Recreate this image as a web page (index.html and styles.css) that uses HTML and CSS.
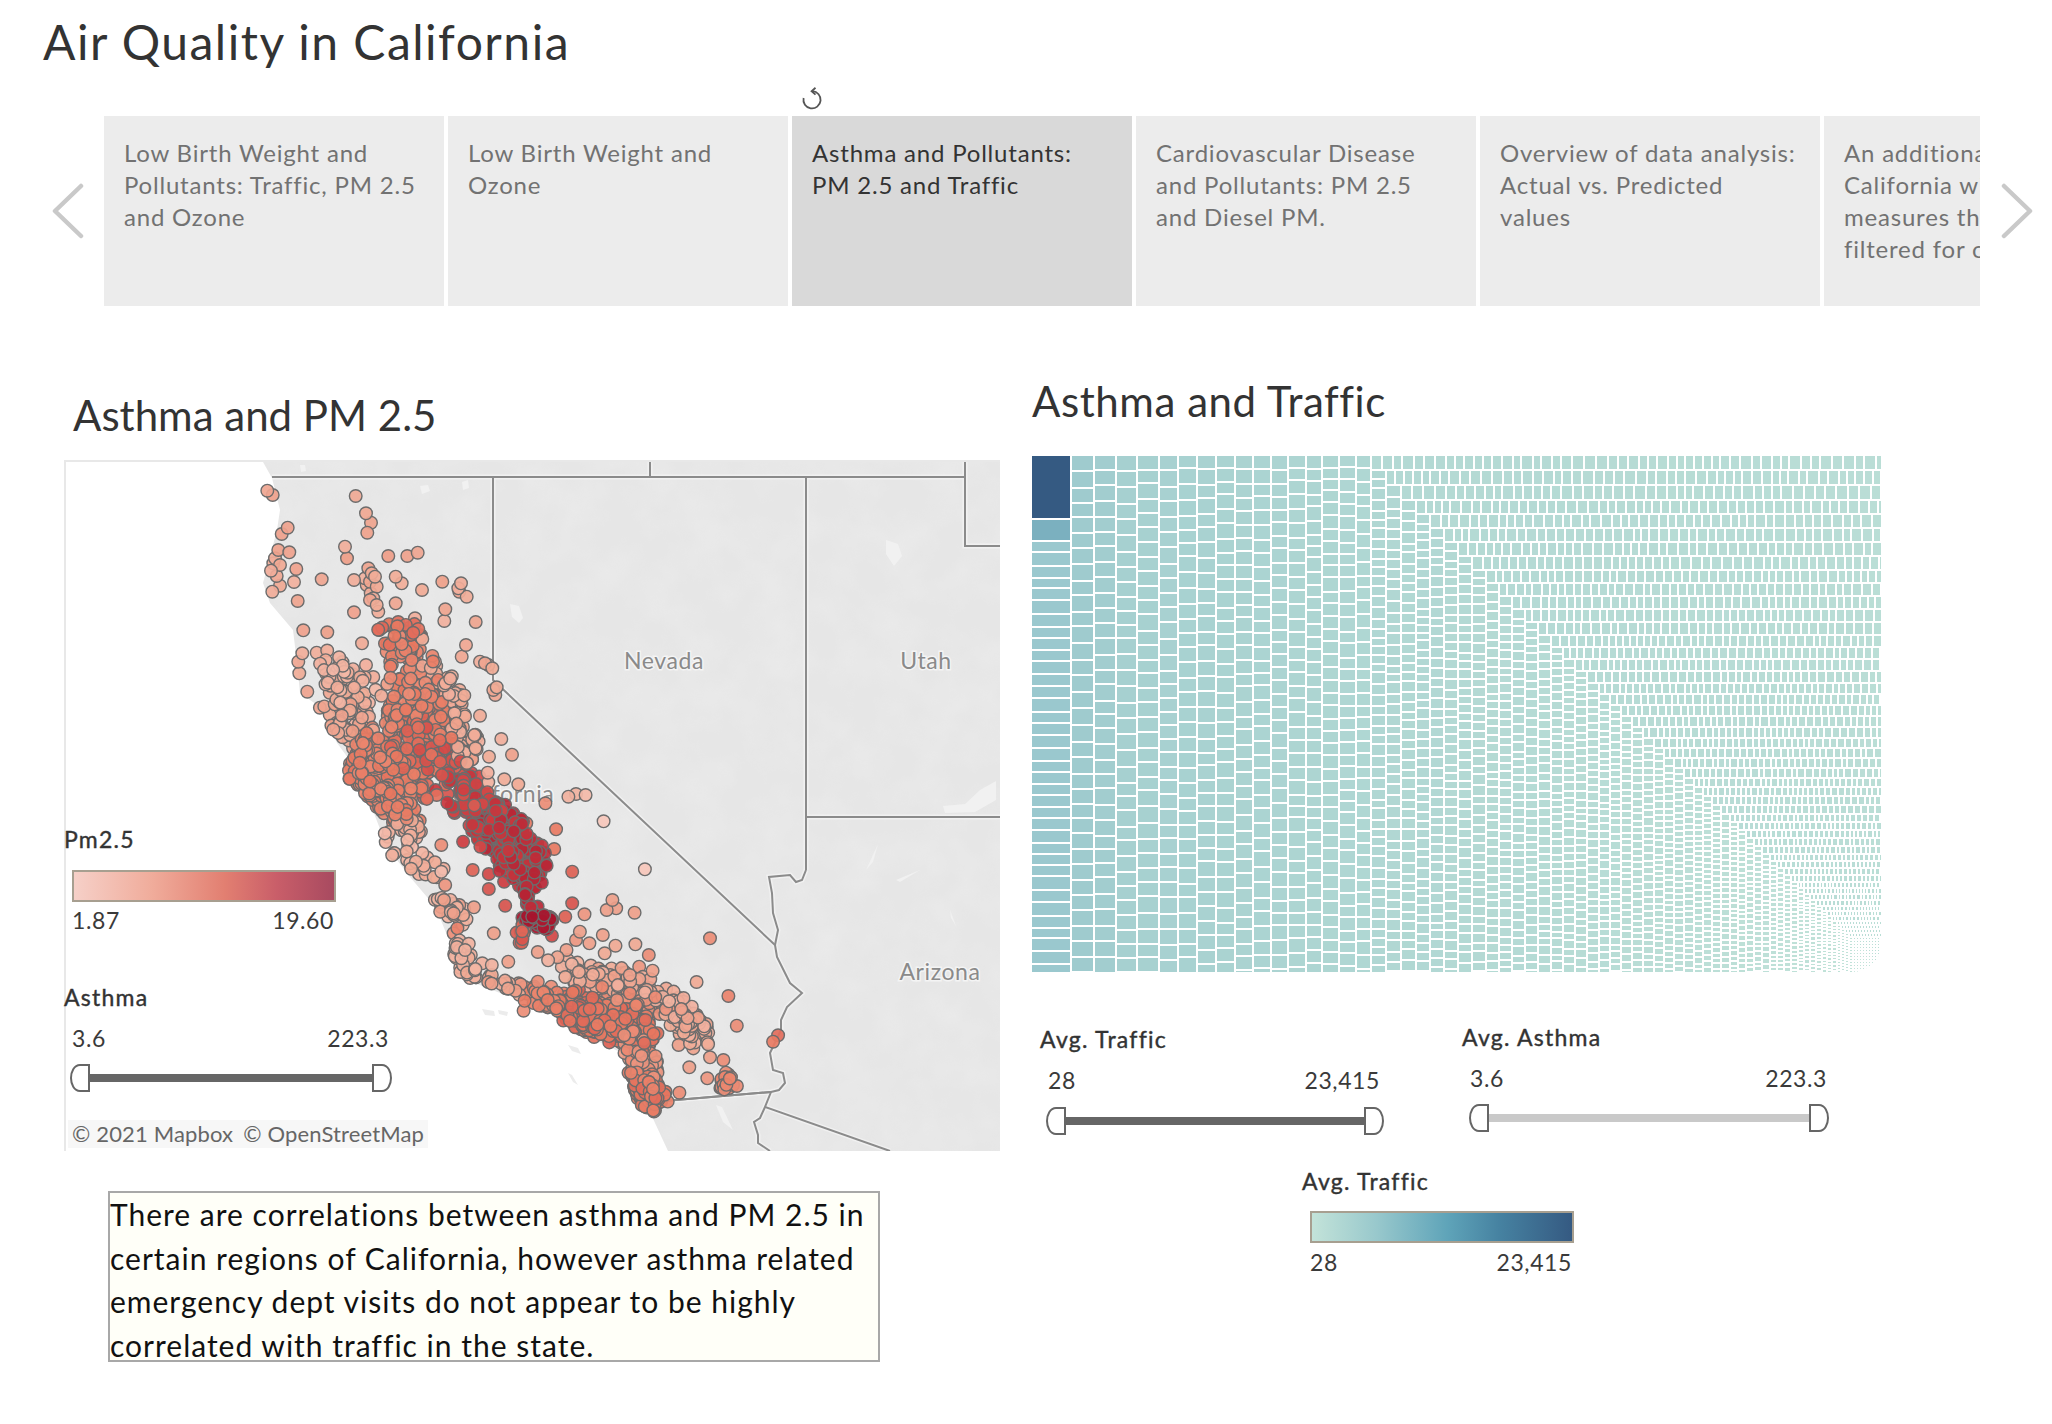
FILE: index.html
```html
<!DOCTYPE html>
<html lang="en">
<head>
<meta charset="utf-8">
<title>Air Quality in California</title>
<link rel="stylesheet" href="styles.css">
</head>
<body>
<div class="page">
  <h1 class="title">Air Quality in California</h1>
  <div class="refresh-row">
    <svg class="refresh" viewBox="0 0 24 24" width="24" height="24"><path d="M12.5 4.2A8.6 8.6 0 1 1 3.6 11" /><path d="M15.5 .8 11.6 4.2l3.9 3.4" /></svg>
  </div>
  <div class="carousel">
    <svg class="chevron" viewBox="0 0 32 56" width="32" height="56"><path d="M29 3 3 28l26 25"/></svg>
    <div class="tabs">
      <div class="tab">Low Birth Weight and<br>Pollutants: Traffic, PM 2.5<br>and Ozone</div>
      <div class="tab">Low Birth Weight and<br>Ozone</div>
      <div class="tab tab-active">Asthma and Pollutants:<br>PM 2.5 and Traffic</div>
      <div class="tab">Cardiovascular Disease<br>and Pollutants: PM 2.5<br>and Diesel PM.</div>
      <div class="tab">Overview of data analysis:<br>Actual vs. Predicted<br>values</div>
      <div class="tab">An additional look at<br>California with other<br>measures that were<br>filtered for counties</div>
    </div>
    <svg class="chevron chevron-next" viewBox="0 0 32 56" width="32" height="56"><path d="M3 3l26 25L3 53"/></svg>
  </div>

  <main class="dash">
    <section class="left">
      <h2 class="sheet-title">Asthma and PM 2.5</h2>
      <div class="map">
        <svg class="map-svg" viewBox="66 462 934 689" width="934" height="689">
          <defs>
            <filter id="terrain" x="0" y="0" width="100%" height="100%">
              <feTurbulence type="fractalNoise" baseFrequency=".025" numOctaves="3" seed="7"/>
              <feColorMatrix type="matrix" values="0 0 0 0 1  0 0 0 0 1  0 0 0 0 1  1.6 0 0 0 -.55"/>
            </filter>
            <g id="borders">
              <path d="M272 477H965M650 462V477M965 462V546H1000M806 477V870M806 817H1000"/>
              <path d="M493 477V680L775 945"/>
              <path d="M806 870 802 880 796 882 790 875 769 877 772 893 773 913 778 930 775 945 777 957 787 977 790 983 802 993 787 1007 781 1020 781 1030 770 1053 773 1070 783 1073 785 1083 779 1090 771 1092 664 1101"/>
              <path d="M771 1092 765 1107 890 1151M765 1107 760 1118 754 1122 758 1135 758 1143 770 1151"/>
            </g>
          </defs>
          <rect x="66" y="462" width="934" height="689" fill="#e6e6e6"/>
          <rect class="terrain" x="66" y="462" width="934" height="689" filter="url(#terrain)"/>
          <g class="water">
            <path d="M943 806l22-2 15-14 16-9v19l-21 12-30 1z"/>
            <path d="M510 604l9 2 4 12-4 5-7-6z"/>
            <path d="M886 540l12 4 4 12-8 10-8-12z"/>
            <path d="M716 1105l6 2 11 23-10-8z"/>
            <path d="M420 486l8-1 2 6-8 3zM462 482l6-2 1 8-6 2zM300 465l5 0 1 6-5 1z"/>
            <path d="M866 870l12-26-5 18zM896 880l24-10-20 12zM950 910l6 16-5-8z"/>
          </g>
          <use href="#borders" class="border-halo"/>
          <use href="#borders" class="border-line"/>
          <path class="ocean" d="M66 462H263L272 478 280 510 277 530 263 583 270 603 293 630 297 663 300 693 320 707 337 743 357 770 370 803 387 847 410 877 427 897 438 913 457 960 467 980 500 993 522 993 568 1027 622 1053 630 1090 649 1110 668 1151H66Z"/>
          <g class="islands">
            <path d="M482 1009l12 2 1 5-10-1zM498 1010l10 2-1 4-8-2zM568 1045l10 3 3 6-9-3zM568 1073l4 2 6 10-5-3z"/>
          </g>
          <path class="border-line" d="M664 1101 771 1092"/>
          <g class="map-labels">
            <text x="664" y="669">Nevada</text>
            <text x="926" y="669">Utah</text>
            <text x="940" y="980">Arizona</text>
            <text x="503" y="802">California</text>
          </g>
          <g id="dots"></g>
        </svg>
        <div class="map-legends">
          <div class="field-label">Pm2.5</div>
          <div class="ramp ramp-red"></div>
          <div class="range range-red"><span>1.87</span><span>19.60</span></div>
          <div class="field-label label-asthma">Asthma</div>
          <div class="range range-asthma"><span>3.6</span><span>223.3</span></div>
          <div class="slider slider-asthma">
            <svg class="handle" viewBox="0 0 20 28" width="20" height="28"><path d="M19 1H10C4 1 1 8 1 14s3 13 9 13h9z"/></svg>
            <span class="track"></span>
            <svg class="handle handle-end" viewBox="0 0 20 28" width="20" height="28"><path d="M19 1H10C4 1 1 8 1 14s3 13 9 13h9z"/></svg>
          </div>
        </div>
        <div class="attribution"><span>© 2021 Mapbox</span><span>© OpenStreetMap</span></div>
      </div>
      <p class="note">There are correlations between asthma and PM 2.5 in certain regions of California, however asthma related emergency dept visits do not appear to be highly correlated with traffic in the state.</p>
    </section>

    <section class="right">
      <h2 class="sheet-title sheet-title-right">Asthma and Traffic</h2>
      <div class="treemap">
        <svg id="treemap" viewBox="1032 456 850 516" width="850" height="516" shape-rendering="crispEdges"></svg>
      </div>
      <div class="filters">
        <div class="filter filter-traffic">
          <div class="field-label">Avg. Traffic</div>
          <div class="range range-traffic"><span>28</span><span>23,415</span></div>
          <div class="slider slider-traffic">
            <svg class="handle" viewBox="0 0 20 28" width="20" height="28"><path d="M19 1H10C4 1 1 8 1 14s3 13 9 13h9z"/></svg>
            <span class="track"></span>
            <svg class="handle handle-end" viewBox="0 0 20 28" width="20" height="28"><path d="M19 1H10C4 1 1 8 1 14s3 13 9 13h9z"/></svg>
          </div>
        </div>
        <div class="filter filter-asthma">
          <div class="field-label">Avg. Asthma</div>
          <div class="range range-avg-asthma"><span>3.6</span><span>223.3</span></div>
          <div class="slider slider-avg-asthma">
            <svg class="handle" viewBox="0 0 20 28" width="20" height="28"><path d="M19 1H10C4 1 1 8 1 14s3 13 9 13h9z"/></svg>
            <span class="track track-light"></span>
            <svg class="handle handle-end" viewBox="0 0 20 28" width="20" height="28"><path d="M19 1H10C4 1 1 8 1 14s3 13 9 13h9z"/></svg>
          </div>
        </div>
      </div>
      <div class="traffic-legend">
        <div class="field-label">Avg. Traffic</div>
        <div class="ramp ramp-blue"></div>
        <div class="range range-blue"><span>28</span><span>23,415</span></div>
      </div>
    </section>
  </main>
</div>
<script src="app.js"></script>
</body>
</html>
```

FILE: styles.css
```css
* { box-sizing: border-box; }
html, body { margin: 0; padding: 0; background: #fff; }
body { font-family: "Lato", "Liberation Sans", sans-serif; color: #333; overflow: hidden; font-variant-ligatures: none; }
.page { width: 2052px; height: 1424px; }

.title { margin: 0; height: 80px; padding: 13px 0 0 43px; font-size: 48px; line-height: 58px; font-weight: 400; color: #333; letter-spacing: 1.5px; }

.refresh-row { height: 36px; padding: 7px 0 0 800px; }
.refresh { display: block; fill: none; stroke: #555; stroke-width: 1.8; }

.carousel { display: flex; align-items: center; height: 190px; padding-left: 52px; }
.chevron { flex: none; fill: none; stroke: #c9c9c9; stroke-width: 4.5; stroke-linecap: round; stroke-linejoin: round; }
.tabs { display: flex; gap: 4px; width: 1876px; height: 190px; margin-left: 20px; overflow: hidden; flex: none; }
.tab { flex: none; width: 340px; padding: 21px 0 0 20px; background: #ececec; color: #727272; font-size: 24px; line-height: 32px; letter-spacing: .8px; white-space: nowrap; }
.tab:last-child { width: 156px; overflow: hidden; }
.tab-active { background: #d9d9d9; color: #333; }
.chevron-next { margin-left: 21px; }

.dash { display: grid; grid-template-columns: 1032px 1fr; }
.sheet-title { margin: 0; padding: 84px 0 0 9px; height: 154px; font-size: 42px; line-height: 50px; font-weight: 400; color: #333; }
.left { padding-left: 64px; }
.sheet-title-right { padding: 70px 0 0 0; height: 150px; letter-spacing: .55px; }

.map { position: relative; width: 936px; height: 691px; border: 2px solid #e8e8e8; border-right: 0; }
.map-svg { display: block; }
.terrain { opacity: .18; }
.ocean { fill: #fff; }
.water path { fill: #f1f1f1; }
.islands path { fill: #ececec; }
.border-halo { fill: none; stroke: #f1f1f1; stroke-width: 5; }
.border-line { fill: none; stroke: #8b8b8b; stroke-width: 2; }
.map-labels text { font-size: 23px; fill: #8a8a8a; text-anchor: middle; stroke: #f4f4f4; stroke-width: 3px; paint-order: stroke; letter-spacing: .6px; }
#dots circle { stroke: #6c6c6c; stroke-width: 1.4; fill-opacity: .92; }

.map-legends { position: absolute; left: -1px; top: 363px; width: 340px; }
.field-label { height: 28px; margin-left: -1px; font-size: 23px; line-height: 28px; font-weight: 400; color: #333; letter-spacing: 1.25px; -webkit-text-stroke: .4px #333; }
.ramp { width: 264px; height: 32px; border: 2px solid #a79f90; }
.ramp-red { margin: 17px 0 0 7px; background: linear-gradient(90deg, #f6d0c8, #f0ac9b 30%, #e27f71 58%, #c95e69 78%, #a84a60); }
.ramp-blue { margin: 16px 0 0 7px; background: linear-gradient(90deg, #c3e3d9, #98c8cc 25%, #5fa4b9 52%, #4682a1 72%, #355a82); }
.range { display: flex; justify-content: space-between; height: 28px; font-size: 23px; line-height: 28px; color: #3a3a3a; letter-spacing: .6px; }
.range-red { width: 262px; margin: 4px 0 0 7px; }
.label-asthma { margin-top: 49px; }
.range-asthma { width: 317px; margin: 13px 0 0 7px; }
.slider { display: flex; align-items: center; height: 28px; }
.slider-asthma { width: 322px; margin: 12px 0 0 5px; }
.handle { flex: none; fill: #fff; stroke: #666; stroke-width: 2; }
.handle-end { transform: scaleX(-1); }
.track { flex: 1; height: 8px; background: #666; }
.track-light { background: #c9c9c9; }

.attribution { position: absolute; left: 2px; top: 658px; display: flex; gap: 10px; padding: 0 4px; height: 28px; background: #f7f7f7; font-size: 22px; line-height: 28px; letter-spacing: .15px; color: #666; }

.note { width: 772px; height: 171px; margin: 40px 0 0 44px; padding: 0; border: 2px solid #a8a8a8; background: #fffff8; color: #111; font-size: 30px; line-height: 43.7px; letter-spacing: 1px; overflow: hidden; }

.treemap { width: 850px; height: 516px; overflow: hidden; border-bottom-right-radius: 30px; }
.treemap svg { display: block; }

.filters { display: flex; margin: 51px 0 0 9px; }
.filter-traffic { width: 422px; margin-top: 2px; }
.range-traffic { width: 332px; margin: 13px 0 0 7px; }
.slider-traffic { width: 338px; margin: 13px 0 0 5px; }
.range-avg-asthma { width: 357px; margin: 13px 0 0 7px; }
.slider-avg-asthma { width: 360px; margin: 12px 0 0 6px; }

.traffic-legend { margin: 32px 0 0 271px; }
.range-blue { width: 262px; margin: 5px 0 0 7px; }
```

FILE: app.js
```js
(function () {
  var seed = 20210;
  function rnd() {
    seed = (seed + 0x6D2B79F5) | 0;
    var t = Math.imul(seed ^ (seed >>> 15), 1 | seed);
    t = (t + Math.imul(t ^ (t >>> 7), 61 | t)) ^ t;
    return ((t ^ (t >>> 14)) >>> 0) / 4294967296;
  }
  var NS = 'http://www.w3.org/2000/svg';
  function hex(c) { return [parseInt(c.substr(1, 2), 16), parseInt(c.substr(3, 2), 16), parseInt(c.substr(5, 2), 16)]; }
  function ramp(stops, v) {
    v = Math.max(0, Math.min(1, v));
    for (var i = 1; i < stops.length; i++) {
      if (v <= stops[i][0]) {
        var a = stops[i - 1], b = stops[i], u = (v - a[0]) / (b[0] - a[0]);
        var ca = hex(a[1]), cb = hex(b[1]);
        return 'rgb(' + Math.round(ca[0] + (cb[0] - ca[0]) * u) + ',' + Math.round(ca[1] + (cb[1] - ca[1]) * u) + ',' + Math.round(ca[2] + (cb[2] - ca[2]) * u) + ')';
      }
    }
    return stops[stops.length - 1][1];
  }

  /* ---- map marks ---- */
  var red = [[0, '#f7cfc5'], [.25, '#f0a994'], [.5, '#e87a62'], [.75, '#cd3b3f'], [1, '#a5122c']];
  var dots = [];
  function add(x, y, v) { dots.push([x, y, v]); }

  var north = [[652,122],[668,135],[917,138],[948,190],[963,218],[952,248],[713,233],[695,252],[885,290],[891,325],[1015,318],[1072,318],[1103,308],[718,307],[685,300],[675,325],[670,340],[690,345],[663,362],[680,378],[739,357],[732,396],[690,407],[667,425],[815,388],[912,390],[743,453],[1037,380],[1055,400],[1116,420],[1177,395],[1233,400],[1225,415],[1228,425],[1250,440],[1037,460],[912,487],[1186,478],[1183,513],[1277,516],[760,541],[832,547],[936,580],[1248,585],[1235,620],[1117,567],[1095,505],[757,610],[800,608],[745,635],[748,670],[772,725],[948,645],[970,681],[1012,702],[994,737],[1290,797],[1354,867],[1386,914],[1317,920],[1313,968],[1315,997],[1363,988],[1405,1003],[1290,635],[1305,640],[1315,645],[1327,655],[1340,712],[1330,720],[1336,735],[955,355],[965,370],[975,380],[945,385],[960,395],[980,410],[950,405],[962,430],[970,445],[960,450],[980,465],[985,485]];
  north.forEach(function (p) { add(50 + p[0] / 3, 450 + p[1] / 3, .2 + rnd() * .12); });

  var south = [[532,124,.05],[640,268,.05],[408,148,.5],[403,207,.5],[450,275,.6],[330,130,.5],[165,185,.75],[210,200,.7],[108,195,.4],[118,315,.35],[190,270,.6],[232,282,.7],[272,305,.75],[232,327,.65],[275,377,.65],[450,370,.65],[432,410,.6],[482,403,.35],[555,360,.3],[540,390,.3],[565,385,.3],[613,398,.3],[810,475,.4],[193,382,.3],[245,460,.3],[283,545,.3],[360,516,.3],[387,541,.2],[858,648,.45],[880,737,.4],[775,606,.25],[323,692,.4],[988,766,.55],[975,785,.5],[730,938,.4],[803,895,.35],[756,862,.3],[810,832,.3],[845,840,.4],[803,787,.25],[728,795,.3],[615,493,.25],[563,497,.25],[535,520,.25],[435,510,.3],[437,548,.25],[470,455,.3],[460,480,.35],[495,490,.3],[530,465,.3],[318,488,.6],[315,455,.55],[397,467,.7],[650,525,.4],[625,560,.35],[660,572,.3],[440,50,.2],[460,42,.2],[485,45,.15],[380,70,.4],[115,360,.3],[105,395,.3],[140,400,.3],[165,405,.25],[155,375,.3],[150,445,.45],[140,460,.4],[170,510,.2],[185,525,.2],[165,555,.2],[195,590,.2],[240,555,.2],[240,585,.25],[215,550,.2],[265,612,.2],[285,610,.25],[310,610,.3],[360,605,.4],[395,620,.4]];
  south.forEach(function (p) { add(400 + p[0] / 2.613, 780 + p[1] / 3, p[2]); });

  /* capsule: x0,y0,x1,y1,radius,count,v0,v1 */
  var capsules = [
    [385,630,420,640,16,34,.5,.58],
    [405,645,420,700,24,70,.4,.52],
    [325,665,360,700,20,60,.15,.25],
    [335,705,365,740,20,55,.2,.32],
    [435,668,450,695,14,26,.18,.28],
    [425,700,435,725,16,60,.45,.55],
    [395,705,400,730,14,45,.42,.55],
    [455,700,470,760,16,55,.2,.3],
    [425,725,445,760,18,70,.5,.6],
    [400,735,430,790,20,60,.48,.6],
    [365,760,395,790,26,230,.42,.52],
    [385,795,410,820,15,80,.4,.52],
    [360,735,385,765,16,60,.42,.52],
    [395,815,420,835,9,22,.2,.3],
    [385,835,435,875,12,28,.12,.25],
    [430,745,470,790,20,70,.62,.72],
    [455,785,495,830,22,80,.72,.8],
    [495,825,530,870,25,170,.78,.88],
    [527,875,533,905,8,26,.84,.9],
    [525,918,550,922,8,40,.95,1],
    [522,928,522,942,6,8,.55,.65],
    [440,900,470,918,10,18,.12,.22],
    [458,942,470,975,10,24,.15,.25],
    [480,978,525,990,7,16,.2,.35],
    [530,995,570,1005,10,55,.42,.5],
    [570,1005,610,1025,18,270,.48,.6],
    [610,1020,645,1035,18,190,.48,.58],
    [565,970,645,988,16,90,.18,.3],
    [590,995,650,1000,10,40,.35,.45],
    [665,995,700,1040,16,75,.18,.3],
    [632,1040,650,1075,14,95,.32,.45],
    [640,1078,655,1100,14,130,.45,.56],
    [725,1075,730,1092,9,20,.38,.46],
    [652,998,665,1010,8,14,.35,.42]
  ];
  capsules.forEach(function (c) {
    for (var i = 0; i < c[5]; i++) {
      var k = rnd(), a = rnd() * Math.PI * 2, r = Math.sqrt(rnd()) * c[4];
      add(c[0] + (c[2] - c[0]) * k + Math.cos(a) * r, c[1] + (c[3] - c[1]) * k + Math.sin(a) * r, c[6] + rnd() * (c[7] - c[6]));
    }
  });

  var dotLayer = document.getElementById('dots');
  var frag = document.createDocumentFragment();
  for (var d = dots.length - 1; d > 0; d--) {
    var j = Math.floor(rnd() * (d + 1)), tmp = dots[d];
    dots[d] = dots[j]; dots[j] = tmp;
  }
  dots.forEach(function (p) {
    var c = document.createElementNS(NS, 'circle');
    c.setAttribute('cx', p[0].toFixed(1));
    c.setAttribute('cy', p[1].toFixed(1));
    c.setAttribute('r', '6.3');
    c.setAttribute('fill', ramp(red, p[2]));
    frag.appendChild(c);
  });
  dotLayer.appendChild(frag);

  /* ---- treemap ---- */
  var teal = [[0, '#98c6cd'], [.1, '#a6d0d0'], [.4, '#b0d7d3'], [1, '#c2e3d9']];
  var tm = document.getElementById('treemap');
  var tf = document.createDocumentFragment();
  var TOP = 456, BOTTOM = 972, RIGHT = 1881, LEFT = 1032;
  function cell(x0, y0, x1, y1, fill) {
    var w = x1 - x0, h = y1 - y0;
    if (w < 1 || h < 1) return;
    var r = document.createElementNS(NS, 'rect');
    r.setAttribute('x', x0); r.setAttribute('y', y0);
    r.setAttribute('width', w); r.setAttribute('height', h);
    r.setAttribute('fill', fill);
    tf.appendChild(r);
  }
  var t = function (x) { return ramp(teal, (x - LEFT) / (RIGHT - LEFT)); };

  /* first column */
  cell(1032, 456, 1070, 518, '#355a82');
  cell(1032, 520, 1070, 540, '#7bb0bf');
  var y = 542;
  while (y < BOTTOM) {
    var h = 10 + Math.round(rnd() * 4);
    cell(1032, y, 1070, Math.min(y + h - 2, BOTTOM), '#9ac8ce');
    y += h;
  }
  /* full-height columns */
  var edges = [1072, 1095, 1117, 1138, 1160, 1179, 1198, 1217, 1236, 1254, 1272, 1289, 1307, 1323, 1340, 1357, 1372];
  for (var c = 0; c < edges.length - 1; c++) {
    y = TOP;
    var base = 15.5 - c * .2;
    while (y < BOTTOM) {
      var ch = Math.round(base - 2 + rnd() * 4);
      cell(edges[c], y, edges[c + 1] - 2, Math.min(y + ch - 2, BOTTOM), t(edges[c]));
      y += ch;
    }
  }
  /* alternating rows and columns */
  var X = 1372, Y = TOP, N = 59;
  function along(th) {
    var p = 10 * Math.pow(th / 15, 1.05);
    return Math.max(3, Math.round(p * (.8 + rnd() * .4)));
  }
  for (var i = 0; i < 200 && X < RIGHT && Y < BOTTOM; i++) {
    var u = Math.min(i / N, .97);
    var th = Math.max(3, Math.round(15 * Math.pow(1 - u, .8)));
    var px = X;
    while (px < RIGHT) {
      var pw = along(th);
      cell(px, Y, Math.min(px + pw - 2, RIGHT), Math.min(Y + th - 2, BOTTOM), t(px * .4 + 1500 * .6));
      px += pw;
    }
    Y += th;
    if (Y >= BOTTOM) break;
    var py = Y;
    while (py < BOTTOM) {
      var ph = along(th);
      cell(X, py, Math.min(X + th - 2, RIGHT), Math.min(py + ph - 2, BOTTOM), t(X));
      py += ph;
    }
    X += th;
  }
  tm.appendChild(tf);
})();
```
